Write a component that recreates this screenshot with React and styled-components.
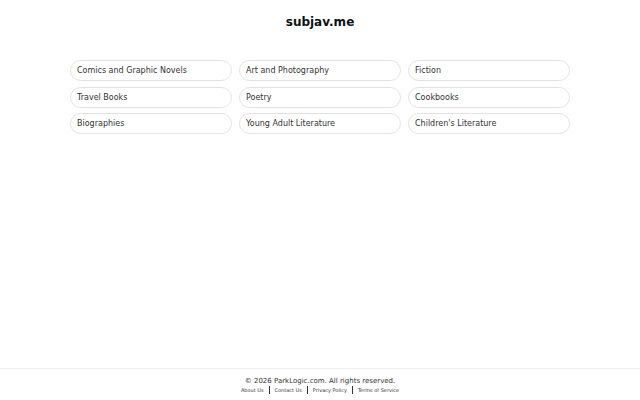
import React from "react";
import styled, { createGlobalStyle } from "styled-components";

const Global = createGlobalStyle`
  html, body { margin: 0; padding: 0; background: #fff; }
  body { font-family: "DejaVu Sans", sans-serif; color: #222; }
`;

const Page = styled.div`
  min-height: 400px;
  display: flex;
  flex-direction: column;
`;

const Main = styled.main`
  flex: 1;
  display: flex;
  flex-direction: column;
  align-items: center;
`;

const Title = styled.h1`
  margin: 14px 0 0;
  font-size: 12px;
  font-weight: bold;
  color: #111;
  line-height: 16px;
`;

const Grid = styled.div`
  margin-top: 30px;
  width: 500px;
  display: grid;
  grid-template-columns: repeat(3, 1fr);
  column-gap: 7px;
  row-gap: 5.5px;
`;

const Pill = styled.a`
  display: flex;
  align-items: center;
  height: 21px;
  box-sizing: border-box;
  padding: 0 6px;
  border: 1px solid #e2e2e2;
  border-radius: 11px;
  font-size: 8px;
  color: #333;
  text-decoration: none;
`;

const Footer = styled.footer`
  border-top: 1px solid #eee;
  padding: 7px 0 6px;
  text-align: center;
`;

const Copy = styled.div`
  font-size: 7px;
  color: #333;
  line-height: 10px;
`;

const Links = styled.div`
  display: flex;
  justify-content: center;
  align-items: center;
  gap: 5px;
  font-size: 5px;
  line-height: 8px;
`;

const Link = styled.a`
  color: #333;
  text-decoration: none;
`;

const Sep = styled.span`
  width: 1px;
  height: 8px;
  background: #333;
`;

const cats = [
  "Comics and Graphic Novels",
  "Art and Photography",
  "Fiction",
  "Travel Books",
  "Poetry",
  "Cookbooks",
  "Biographies",
  "Young Adult Literature",
  "Children's Literature",
];

const links = ["About Us", "Contact Us", "Privacy Policy", "Terms of Service"];

export default function App() {
  return (
    <Page>
      <Global />
      <Main>
        <Title>subjav.me</Title>
        <Grid>
          {cats.map((c) => (
            <Pill key={c} href="#">{c}</Pill>
          ))}
        </Grid>
      </Main>
      <Footer>
        <Copy>© 2026 ParkLogic.com. All rights reserved.</Copy>
        <Links>
          {links.map((l, i) => (
            <React.Fragment key={l}>
              {i > 0 && <Sep />}
              <Link href="#">{l}</Link>
            </React.Fragment>
          ))}
        </Links>
      </Footer>
    </Page>
  );
}
